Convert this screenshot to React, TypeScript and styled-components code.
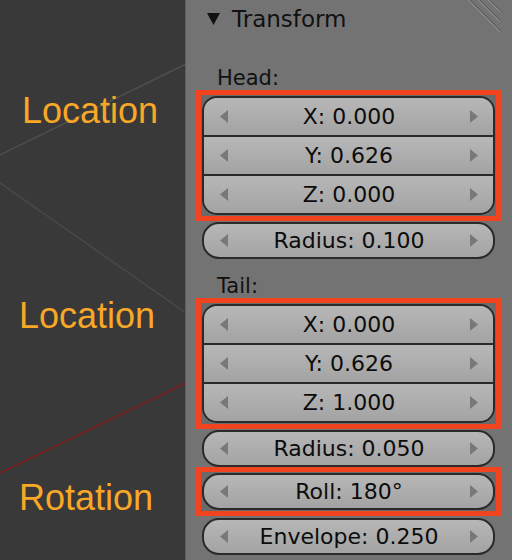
import React, { FC } from "react";
import styled, { createGlobalStyle } from "styled-components";

const GlobalStyle = createGlobalStyle`
  html, body {
    margin: 0;
    padding: 0;
    background: #393939;
  }
  body {
    width: 512px;
    height: 560px;
    overflow: hidden;
    font-family: "DejaVu Sans", sans-serif;
  }
`;

const Page = styled.div`
  display: flex;
  width: 512px;
  height: 560px;
  overflow: hidden;
`;

const Viewport = styled.div`
  position: relative;
  flex: none;
  width: 185px;
  display: flex;
  flex-direction: column;
  background: #393939;
`;

const Wires = styled.svg`
  position: absolute;
  inset: 0;
  pointer-events: none;
`;

const Callout = styled.div<{ $top: number; $indent: number }>`
  position: relative;
  margin-top: ${p => p.$top}px;
  padding-left: ${p => p.$indent}px;
  font-family: "Liberation Sans", Arial, sans-serif;
  font-size: 36px;
  line-height: 40px;
  color: #f8a726;
`;

const Panel = styled.div`
  position: relative;
  flex: 1;
  display: flex;
  flex-direction: column;
  padding: 5px 11px 0 10px;
  background: #737373;
  border-left: 1px solid #5e5e5e;
`;

const Grip = styled.svg`
  position: absolute;
  top: 0;
  right: 10px;
`;

const Header = styled.div`
  display: flex;
  align-items: center;
  height: 28px;
  padding-left: 11px;
  font-size: 23px;
  color: #111;
`;

const HeaderTitle = styled.span`
  margin-left: 12px;
`;

const Label = styled.div<{ $top: number }>`
  margin-top: ${p => p.$top}px;
  padding-left: 21px;
  font-size: 21px;
  line-height: 24px;
  color: #111;
`;

const Frame = styled.div<{ $highlight?: boolean; $top?: number }>`
  margin-top: ${p => p.$top ?? 0}px;
  padding: ${p => (p.$highlight ? "1px" : "0 6px")};
  border: ${p => (p.$highlight ? "5px solid #f2431f" : "none")};
  background: ${p => (p.$highlight ? "#6a6a6a" : "transparent")};
`;

const Group = styled.div`
  border: 2px solid #2a2a2a;
  border-radius: 15px;
  overflow: hidden;
`;

const Field = styled.div<{ $single?: boolean }>`
  display: flex;
  align-items: center;
  height: 37px;
  padding: 0 15px 0 16px;
  background: linear-gradient(#b7b7b7, #a3a3a3);
  font-size: 22px;
  color: #0c0c0c;
  border-top: 2px solid #2a2a2a;
  &:first-child {
    border-top: none;
  }
  ${p =>
    p.$single &&
    `
    height: 33px;
    border: 2px solid #2a2a2a;
    border-radius: 17px;
    &:first-child { border-top: 2px solid #2a2a2a; }
  `}
`;

const FieldText = styled.span`
  flex: 1;
  text-align: center;
  white-space: nowrap;
`;

const Arrow: FC<{ dir: "left" | "right" }> = ({ dir }) => (
  <svg width="8" height="13" viewBox="0 0 8 13">
    <polygon points={dir === "left" ? "8,0 8,13 0,6.5" : "0,0 0,13 8,6.5"} fill="#787878" />
  </svg>
);

type Value = { name: string; value: string };

const NumberField: FC<Value & { single?: boolean }> = ({ name, value, single }) => (
  <Field $single={single}>
    <Arrow dir="left" />
    <FieldText>
      {name}: {value}
    </FieldText>
    <Arrow dir="right" />
  </Field>
);

const VectorBox: FC<{ values: Value[] }> = ({ values }) => (
  <Frame $highlight>
    <Group>
      {values.map(v => (
        <NumberField key={v.name} {...v} />
      ))}
    </Group>
  </Frame>
);

const head: Value[] = [
  { name: "X", value: "0.000" },
  { name: "Y", value: "0.626" },
  { name: "Z", value: "0.000" },
];

const tail: Value[] = [
  { name: "X", value: "0.000" },
  { name: "Y", value: "0.626" },
  { name: "Z", value: "1.000" },
];

const App: FC = () => (
  <>
    <GlobalStyle />
    <Page>
      <Viewport>
        <Wires width="185" height="560" viewBox="0 0 185 560">
          <line x1="186" y1="64" x2="0" y2="155" stroke="#525252" strokeWidth="1.2" />
          <line x1="0" y1="183" x2="186" y2="313" stroke="#4c4c4c" strokeWidth="1.2" />
          <line x1="186" y1="383" x2="0" y2="473" stroke="#8a1818" strokeWidth="1.3" />
        </Wires>
        <Callout $top={91} $indent={22}>
          Location
        </Callout>
        <Callout $top={165} $indent={19}>
          Location
        </Callout>
        <Callout $top={142} $indent={19}>
          Rotation
        </Callout>
      </Viewport>

      <Panel>
        <Grip width="34" height="34" viewBox="0 0 34 34">
          <line x1="0" y1="0" x2="32" y2="32" stroke="#939393" strokeWidth="1" />
          <line x1="1" y1="-1" x2="33" y2="31" stroke="#5c5c5c" strokeWidth="1" />
          <line x1="10" y1="0" x2="32" y2="22" stroke="#939393" strokeWidth="1" />
          <line x1="11" y1="-1" x2="33" y2="21" stroke="#5c5c5c" strokeWidth="1" />
          <line x1="20" y1="0" x2="32" y2="12" stroke="#939393" strokeWidth="1" />
          <line x1="21" y1="-1" x2="33" y2="11" stroke="#5c5c5c" strokeWidth="1" />
        </Grip>

        <Header>
          <svg width="13" height="12" viewBox="0 0 13 12">
            <polygon points="0,0 13,0 6.5,12" fill="#111" />
          </svg>
          <HeaderTitle>Transform</HeaderTitle>
        </Header>

        <Label $top={33}>Head:</Label>
        <VectorBox values={head} />
        <Frame $top={1}>
          <NumberField single name="Radius" value="0.100" />
        </Frame>

        <Label $top={15}>Tail:</Label>
        <VectorBox values={tail} />
        <Frame $top={1}>
          <NumberField single name="Radius" value="0.050" />
        </Frame>
        <Frame $highlight>
          <NumberField single name="Roll" value="180°" />
        </Frame>
        <Frame $top={2}>
          <NumberField single name="Envelope" value="0.250" />
        </Frame>
      </Panel>
    </Page>
  </>
);

export default App;
